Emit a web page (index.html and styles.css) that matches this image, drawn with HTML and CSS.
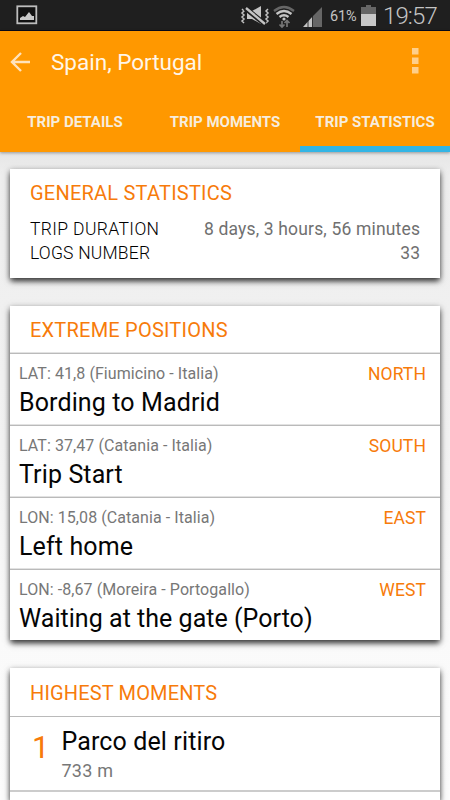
FILE: index.html
```html
<!DOCTYPE html>
<html lang="en">
<head>
<meta charset="utf-8">
<title>Trip Statistics</title>
<link rel="stylesheet" href="styles.css">
</head>
<body>
<div class="status">
  <svg class="picture" width="22" height="20" viewBox="0 0 22 20"><rect x="1.3" y="1.3" width="19" height="17" fill="#111" stroke="#bdbdbd" stroke-width="1.8"/><path d="M4 15v-2l3-2 2 1 4-5 3 4h2v4z" fill="#c8c8c8"/></svg>
  <span class="spacer"></span>
  <svg class="signals" width="84" height="24" viewBox="0 0 84 24">
    <g fill="none" stroke="#c4c4c4" stroke-width="1.5"><path d="M2 4l2 2-2 2 2 2-2 2 2 2-2 2 2 2M28 4l-2 2 2 2-2 2 2 2-2 2 2 2-2 2"/></g>
    <path d="M7 6h5l9-5v18l-9-5H7z" fill="#c4c4c4"/><path d="M5 3l20 16" stroke="#1f1f1f" stroke-width="5"/><path d="M6 3l19 16" stroke="#c4c4c4" stroke-width="2.4"/>
    <g fill="none" stroke-width="2.3"><path d="M34 6q10-8 20 0" stroke="#666"/><path d="M36.500 9q7.500-6 15 0M39.500 12q4.500-3.500 9 0" stroke="#c4c4c4"/></g><circle cx="44" cy="14" r="1.6" fill="#c4c4c4"/>
    <path d="M42 22v-6m-2.500 3.500l2.500 2.500 2.500-2.500M47 15.500v6.500m-2.500-4l2.500-2.500 2.500 2.500" fill="none" stroke="#777" stroke-width="1.7"/>
    <path d="M82 2v20H73V11z" fill="#666"/><path d="M73 11v11H63z" fill="#c4c4c4"/><path d="M68 14v8M72.500 9v13" stroke="#1f1f1f" stroke-width=".9"/>
  </svg>
  <span class="percent">61%</span>
  <svg class="battery" width="15" height="21" viewBox="0 0 15 21"><path d="M5 0h5v2h5v7H0V2h5z" fill="#666"/><path d="M0 9h15v12H0z" fill="#c8c8c8"/></svg>
  <span class="clock">19:57</span>
</div>
<header class="appbar">
  <div class="toolbar">
    <svg class="back" width="21" height="20" viewBox="0 0 21 20"><path d="M20 10H2M11 1L2 10l9 9" fill="none" stroke="#ffe3bd" stroke-width="2.4"/></svg>
    <h1 class="title">Spain, Portugal</h1>
    <span class="spacer"></span>
    <svg class="more" width="7" height="26" viewBox="0 0 7 26"><path d="M0 0h6.500v6.500H0zM0 9.500h6.500V16H0zM0 19h6.500v6.500H0z" fill="#ffcf8a"/></svg>
  </div>
  <nav class="tabs">
    <span class="tab details">TRIP DETAILS</span><span class="tab moments">TRIP MOMENTS</span><span class="tab active">TRIP STATISTICS</span>
  </nav>
</header>
<main class="content">
  <section class="card general">
    <h2 class="heading">GENERAL STATISTICS</h2>
    <div class="stat"><span class="duration">TRIP DURATION</span><span class="value">8 days, 3 hours, 56 minutes</span></div>
    <div class="stat"><span class="logs">LOGS NUMBER</span><span class="value">33</span></div>
  </section>
  <section class="card extremes">
    <h2 class="heading">EXTREME POSITIONS</h2>
    <div class="row"><div class="place"><div class="coord">LAT: 41,8 (Fiumicino - Italia)</div><div class="name">Bording to Madrid</div></div><span class="direction">NORTH</span></div>
    <div class="row"><div class="place"><div class="coord">LAT: 37,47 (Catania - Italia)</div><div class="name">Trip Start</div></div><span class="direction">SOUTH</span></div>
    <div class="row"><div class="place"><div class="coord">LON: 15,08 (Catania - Italia)</div><div class="name">Left home</div></div><span class="direction">EAST</span></div>
    <div class="row"><div class="place"><div class="coord">LON: -8,67 (Moreira - Portogallo)</div><div class="name long">Waiting at the gate (Porto)</div></div><span class="direction">WEST</span></div>
  </section>
  <section class="card highest">
    <h2 class="heading">HIGHEST MOMENTS</h2>
    <div class="moment"><span class="rank">1</span><div><div class="name">Parco del ritiro</div><div class="height">733 m</div></div></div>
    <div class="next"></div>
  </section>
</main>
</body>
</html>
```

FILE: styles.css
```css
* { box-sizing: border-box; }
body { margin: 0; height: 800px; overflow: hidden; display: flex; flex-direction: column; font-family: Roboto, sans-serif; background: #f0f0f0; }
h1, h2 { margin: 0; font-weight: 400; }
svg { display: block; flex: none; }
.spacer { flex: 1; }
.status { flex: none; height: 31px; display: flex; align-items: center; padding: 0 12px 0 16px; background: #1f1f1f; border-bottom: 1px solid #080818; color: #c4c4c4; white-space: nowrap; }
.signals { margin: 3px 6px 0 0; }
.percent { width: 31px; font-size: 14.5px; letter-spacing: -.1px; margin-top: 2px; }
.battery { margin: 1px 7px 0 0; }
.clock { width: 55px; font-size: 24px; font-weight: 300; letter-spacing: -.9px; margin-top: 1px; }
.appbar { flex: none; height: 121px; background: #ff9800; color: #fff6e8; box-shadow: 0 1px 3px rgba(0,0,0,.35); z-index: 1; }
.toolbar { height: 61px; display: flex; align-items: center; padding: 0 31px 0 10px; }
.title { margin-left: 20px; font-size: 22.5px; line-height: 30px; }
.more { margin-top: -1px; }
.tabs { height: 60px; display: grid; grid-template-columns: repeat(3, 1fr); font-size: 15px; font-weight: 700; line-height: 60px; color: #f7eddd; white-space: nowrap; text-align: center; }
.tab { height: 60px; }
.active { border-bottom: 6px solid #33b5e5; }
.content { flex: 1; min-height: 0; padding: 17px 10px 0; display: flex; flex-direction: column; background: linear-gradient(#e6e6e6, #eee 24px, #f2f2f2 45%, #fafafa 75%, #fcfcfc); }
.card { flex: none; background: #fff; box-shadow: 0 2px 6px rgba(0,0,0,.5), 0 4px 6px -1px rgba(0,0,0,.6); }
.general { height: 109px; margin-bottom: 28px; padding-top: 1px; }
.extremes { height: 334px; margin-bottom: 28px; }
.highest { flex: 1; min-height: 0; overflow: hidden; }
.heading { height: 47px; padding-left: 20px; font-size: 20px; line-height: 48px; letter-spacing: .22px; color: #f77b0a; white-space: nowrap; }
.general .heading { line-height: 47px; }
.stat { display: flex; justify-content: space-between; height: 24px; padding: 0 20px; font-size: 17.5px; line-height: 24px; font-weight: 300; letter-spacing: .2px; color: #000; }
.duration { letter-spacing: .37px; }
.value { font-weight: 400; letter-spacing: .17px; margin-right: -.17px; color: #707070; }
.row { height: 72px; display: flex; justify-content: space-between; padding: 10px 14px 0 9px; border-top: 1px solid #bababa; box-shadow: 0 -1px 0 #e2e2e2; white-space: nowrap; }
.coord { font-size: 16px; line-height: 20px; letter-spacing: .07px; color: #777; }
.name { font-size: 25px; line-height: 38px; letter-spacing: .12px; color: #050505; white-space: nowrap; }
.long { letter-spacing: .03px; }
.direction { font-size: 17.5px; line-height: 21px; letter-spacing: .1px; color: #f77b0a; }
.moment { height: 74px; display: flex; border-top: 1px solid #bababa; padding-top: 7px; }
.rank { width: 51.5px; padding-left: 22px; font-size: 31px; line-height: 47px; color: #f77b0a; }
.height { font-size: 18px; line-height: 20px; letter-spacing: .25px; color: #777; }
.next { border-top: 2px solid #ccc; }
.highest .heading { height: 48px; line-height: 50px; letter-spacing: .15px; }
.highest .name { margin-top: -1px; }
```
